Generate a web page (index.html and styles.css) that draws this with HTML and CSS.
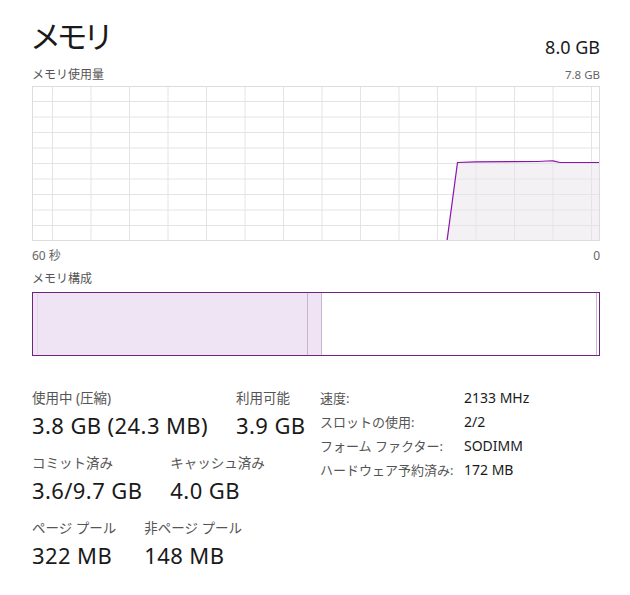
FILE: index.html
```html
<!DOCTYPE html>
<html lang="ja">
<head>
<meta charset="utf-8">
<title>メモリ</title>
<link rel="stylesheet" href="styles.css">
</head>
<body>
<div class="panel">
  <div class="head">
    <div class="title">メモリ</div>
    <div class="total">8.0 GB</div>
  </div>
  <div class="caption-row">
    <span>メモリ使用量</span>
    <span class="small">7.8 GB</span>
  </div>
  <div class="graph">
    <svg width="568" height="155" viewBox="0 0 568 155">
      <polygon fill="#f4f1f5" points="414,155 424.5,76.5 443,75.8 505,75.5 514,75 520,74.8 527,76.5 568,76.5 568,155"/>
      <g stroke="#e4e4e4" stroke-width="1">
        <line x1="19.5" y1="0" x2="19.5" y2="155"/>
        <line x1="58" y1="0" x2="58" y2="155"/>
        <line x1="96.5" y1="0" x2="96.5" y2="155"/>
        <line x1="135" y1="0" x2="135" y2="155"/>
        <line x1="173.5" y1="0" x2="173.5" y2="155"/>
        <line x1="212" y1="0" x2="212" y2="155"/>
        <line x1="250.5" y1="0" x2="250.5" y2="155"/>
        <line x1="289" y1="0" x2="289" y2="155"/>
        <line x1="327.5" y1="0" x2="327.5" y2="155"/>
        <line x1="366" y1="0" x2="366" y2="155"/>
        <line x1="404.5" y1="0" x2="404.5" y2="155"/>
        <line x1="443" y1="0" x2="443" y2="155"/>
        <line x1="481.5" y1="0" x2="481.5" y2="155"/>
        <line x1="520" y1="0" x2="520" y2="155"/>
        <line x1="558.5" y1="0" x2="558.5" y2="155"/>
        <line x1="0" y1="15.5" x2="568" y2="15.5"/>
        <line x1="0" y1="31" x2="568" y2="31"/>
        <line x1="0" y1="46.5" x2="568" y2="46.5"/>
        <line x1="0" y1="62" x2="568" y2="62"/>
        <line x1="0" y1="77.5" x2="568" y2="77.5"/>
        <line x1="0" y1="93" x2="568" y2="93"/>
        <line x1="0" y1="108.5" x2="568" y2="108.5"/>
        <line x1="0" y1="124" x2="568" y2="124"/>
        <line x1="0" y1="139.5" x2="568" y2="139.5"/>
      </g>
      <polyline fill="none" stroke="#8b12ae" stroke-width="1.2" points="414,155 424.5,76.5 443,75.8 505,75.5 514,75 520,74.8 527,76.5 568,76.5"/>
    </svg>
  </div>
  <div class="caption-row axis">
    <span>60 秒</span>
    <span>0</span>
  </div>
  <div class="caption-row comp-label">
    <span>メモリ構成</span>
  </div>
  <div class="comp">
    <div class="seg reserved"></div>
    <div class="seg inuse"></div>
    <div class="seg modified"></div>
    <div class="seg standby"></div>
    <div class="seg free"></div>
  </div>
  <div class="stats">
    <div class="left">
      <div class="row">
        <div class="stat"><div class="label">使用中 (圧縮)</div><div class="value">3.8 GB (24.3 MB)</div></div>
        <div class="stat"><div class="label">利用可能</div><div class="value">3.9 GB</div></div>
      </div>
      <div class="row">
        <div class="stat"><div class="label">コミット済み</div><div class="value">3.6/9.7 GB</div></div>
        <div class="stat"><div class="label">キャッシュ済み</div><div class="value">4.0 GB</div></div>
      </div>
      <div class="row">
        <div class="stat"><div class="label">ページ プール</div><div class="value">322 MB</div></div>
        <div class="stat"><div class="label">非ページ プール</div><div class="value">148 MB</div></div>
      </div>
    </div>
    <div class="right">
      <div class="k">速度:</div><div class="v">2133 MHz</div>
      <div class="k">スロットの使用:</div><div class="v">2/2</div>
      <div class="k">フォーム ファクター:</div><div class="v">SODIMM</div>
      <div class="k">ハードウェア予約済み:</div><div class="v">172 MB</div>
    </div>
  </div>
</div>
</body>
</html>
```

FILE: styles.css
```css
html, body {
  margin: 0;
  padding: 0;
  background: #ffffff;
}
body {
  font-family: "Noto Sans", "Noto Sans CJK JP", sans-serif;
  color: #1a1a1a;
}
.panel {
  width: 568px;
  padding: 16px 30px 0 32px;
}
.head {
  display: flex;
  justify-content: space-between;
  align-items: flex-end;
  height: 46px;
}
.title {
  font-family: "Noto Sans CJK JP", sans-serif;
  font-size: 31px;
  line-height: 40px;
  font-weight: 400;
  letter-spacing: -4.5px;
  margin-left: -2px;
  padding-bottom: 7px;
}
.total {
  font-size: 18px;
  line-height: 22px;
  padding-bottom: 4px;
}
.caption-row {
  display: flex;
  justify-content: space-between;
  align-items: flex-end;
  font-size: 12px;
  line-height: 18px;
  color: #555555;
  height: 22px;
}
.caption-row .small {
  font-size: 11.5px;
  color: #666666;
}
.graph {
  width: 566px;
  height: 153px;
  border: 1px solid #dcdcdc;
  overflow: hidden;
  margin-top: 2px;
}
.graph svg {
  display: block;
  margin: -1px 0 0 0;
}
.axis {
  align-items: center;
  height: 26px;
  margin-top: 2px;
  color: #666666;
}
.comp-label {
  height: 22px;
  align-items: flex-start;
  margin-top: 1px;
}
.comp {
  display: flex;
  width: 566px;
  height: 62px;
  border: 1px solid #6f2380;
}
.seg {
  height: 100%;
}
.reserved {
  width: 4px;
  background: #efe4f3;
  border-right: 1px solid #e4d8ea;
}
.inuse {
  width: 269px;
  background: #efe4f3;
  border-right: 1px solid #c7b4cf;
}
.modified {
  width: 13px;
  background: #efe4f3;
  border-right: 1px solid #c7b4cf;
}
.standby {
  flex: 1;
  background: #ffffff;
  border-right: 1px solid #cdb8d4;
}
.free {
  width: 2px;
  background: #ffffff;
}
.stats {
  display: flex;
  margin-top: 33px;
}
.left {
  width: 288px;
}
.row {
  display: flex;
  gap: 28px;
  height: 65px;
}
.label {
  font-size: 13.5px;
  line-height: 18px;
  color: #555555;
}
.value {
  font-size: 22px;
  line-height: 28px;
  letter-spacing: 0.4px;
  margin-top: 4px;
  color: #1a1a1a;
}
.right {
  display: grid;
  grid-template-columns: 144px auto;
  grid-auto-rows: 24px;
  align-content: start;
}
.k {
  font-size: 13px;
  line-height: 18px;
  color: #555555;
}
.v {
  font-size: 14px;
  line-height: 18px;
  color: #1a1a1a;
}
```
